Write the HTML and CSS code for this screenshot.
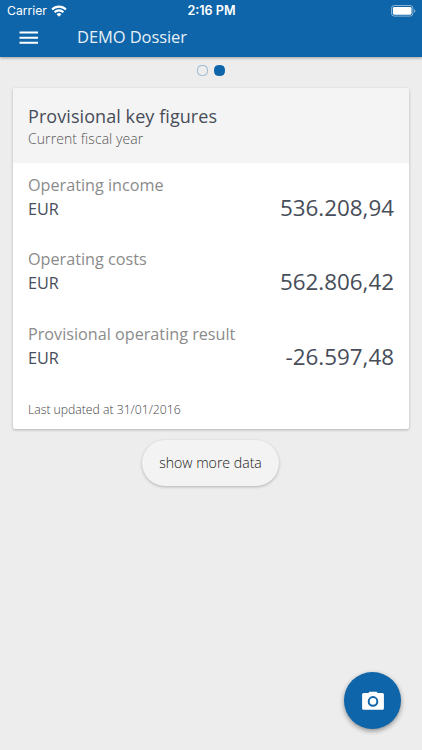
FILE: index.html
```
<!DOCTYPE html>
<html lang="en">
<head>
<meta charset="utf-8">
<title>DEMO Dossier</title>
<link rel="stylesheet" href="styles.css">
</head>
<body>
<header class="header">
  <div class="status">
    <div class="carrier"><span>Carrier</span>
      <svg class="wifi" viewBox="0 0 16 12" width="16" height="12"><g fill="none" stroke="#fff" stroke-width="2.1"><path d="M1.1 4.5a9.8 9.8 0 0 1 13.8 0"/><path d="M3.6 7.2a6.2 6.2 0 0 1 8.8 0"/></g><path d="M8 11.7 5.6 9.2a3.4 3.4 0 0 1 4.8 0z" fill="#fff"/></svg>
    </div>
    <span class="time">2:16 PM</span>
    <svg class="battery" viewBox="0 0 25 12" width="25" height="12"><rect x=".5" y=".5" width="21.4" height="10.6" rx="2.8" fill="none" stroke="#fff" stroke-opacity=".5"/><rect x="1.9" y="1.9" width="18.6" height="7.8" rx="1.4" fill="#fff"/><path d="M23.2 4v3.8q1.2-.5 1.2-1.9T23.2 4z" fill="#fff" opacity=".5"/></svg>
  </div>
  <div class="toolbar">
    <svg class="menu" viewBox="0 0 20 14" width="20" height="14" fill="#fff"><path d="M.5.6h18.5v2H.5zM.5 5.7h18.5v2H.5zM.5 10.8h18.5v2H.5z"/></svg>
    <span class="heading">DEMO Dossier</span>
  </div>
</header>
<nav class="pager"><i class="dot"></i><i class="dot active"></i></nav>
<main class="card">
  <div class="card-head">
    <div class="title">Provisional key figures</div>
    <div class="subtitle">Current fiscal year</div>
  </div>
  <section class="row"><div class="label">Operating income</div><div class="line"><span class="currency">EUR</span><span class="value">536.208,94</span></div></section>
  <section class="row"><div class="label">Operating costs</div><div class="line"><span class="currency">EUR</span><span class="value">562.806,42</span></div></section>
  <section class="row"><div class="label">Provisional operating result</div><div class="line"><span class="currency">EUR</span><span class="value">-26.597,48</span></div></section>
  <div class="updated">Last updated at 31/01/2016</div>
</main>
<button class="more">show more data</button>
<button class="fab" aria-label="Camera"><svg viewBox="0 0 24 20" width="24" height="20"><path fill="#fff" fill-rule="evenodd" d="M8.4.8h7.2l1 1.2h4.8q1.5 0 1.5 1.5v14q0 1.3-1.5 1.3H2.6q-1.5 0-1.5-1.3v-14Q1.1 2 2.6 2h4.8zM12 5.1a5.3 5.3 0 1 0 0 10.6 5.3 5.3 0 0 0 0-10.6z"/><circle cx="12" cy="10.4" r="3.3" fill="#fff"/></svg></button>
</body>
</html>
```
FILE: styles.css
```
* { box-sizing: border-box; }
body {
  margin: 0;
  height: 750px;
  overflow: hidden;
  background: #ededed;
  font-family: "Open Sans", sans-serif;
  color: #474d59;
  white-space: nowrap;
}
.header {
  height: 57px;
  background: #0e65a9;
  color: #fff;
  box-shadow: 0 1px 3px rgba(0, 0, 0, .35);
}
.status {
  display: grid;
  grid-template-columns: 1fr auto 1fr;
  align-items: center;
  height: 22px;
  padding: 0 6px 0 7px;
  font: 12.2px/22px Inter, sans-serif;
}
.carrier { display: flex; align-items: center; gap: 4px; }
.wifi { margin-top: -1px; }
.time { font-size: 12.6px; font-weight: 600; }
.battery { justify-self: end; margin-top: -1px; }
.toolbar { display: flex; align-items: center; height: 31px; padding-left: 19px; }
.heading { margin-left: 38px; margin-top: -1px; font-size: 16.5px; line-height: 30px; letter-spacing: -.08px; color: #e7f0f7; }
.pager { display: flex; justify-content: center; gap: 6px; height: 31px; padding-top: 8px; }
.dot { width: 11px; height: 11px; border: 1px solid #94b6d0; border-radius: 4.5px; }
.active { background: #0e65a9; border-color: #0e65a9; }
.card {
  margin: 0 13px;
  height: 341px;
  background: #fff;
  border-radius: 2px;
  box-shadow: 0 1px 3px rgba(0, 0, 0, .25);
}
.card-head { height: 75px; padding: 16px 15px 0; background: #f4f4f4; border-radius: 2px 2px 0 0; }
.title { font-size: 18px; line-height: 25px; letter-spacing: .07px; }
.subtitle { font-size: 14px; line-height: 19px; font-weight: 300; letter-spacing: .08px; color: #555; }
.row { height: 74.4px; padding: 11px 15px 0; }
.label { font-size: 16.2px; line-height: 23px; color: #8b8b8b; }
.line { display: flex; justify-content: space-between; height: 24px; line-height: 24px; }
.currency { font-size: 16.2px; }
.value { font-size: 22.4px; line-height: 22px; }
.updated { padding: 14px 15px 0; font-size: 12.2px; line-height: 20px; font-weight: 300; color: #444; }
.more {
  display: block;
  width: 137px;
  height: 46px;
  margin: 11px auto 0 142px;
  padding: 0;
  border: 0;
  border-radius: 23px;
  background: #f3f3f3;
  box-shadow: 0 1px 3px rgba(0, 0, 0, .25);
  font: 300 14.1px/44px "Open Sans", sans-serif;
  color: #222;
}
.fab {
  position: absolute;
  right: 21px;
  bottom: 21px;
  display: grid;
  place-items: center;
  width: 57px;
  height: 57px;
  padding: 0;
  border: 0;
  border-radius: 50%;
  background: #0e65a9;
  box-shadow: 0 2px 5px rgba(0, 0, 0, .4);
}
```
